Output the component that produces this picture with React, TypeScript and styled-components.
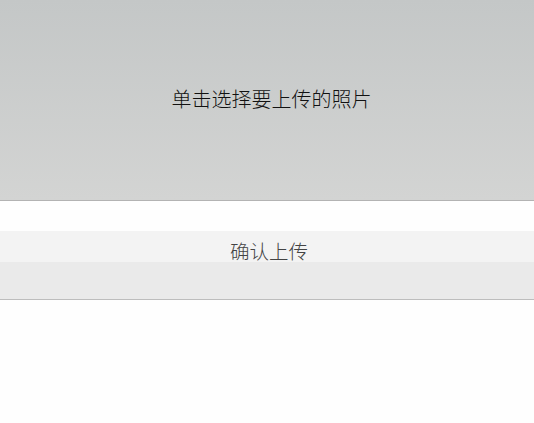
import styled, { createGlobalStyle } from "styled-components";

const GlobalStyle = createGlobalStyle`
  html, body {
    margin: 0;
    padding: 0;
    background: #fefefe;
    font-family: "Noto Sans CJK SC", "Noto Sans", sans-serif;
  }
`;

export default function App() {
  return (
    <>
      <GlobalStyle />
      <Page>
        <PickArea>
          <PickLabel>单击选择要上传的照片</PickLabel>
        </PickArea>
        <ConfirmButton type="button">确认上传</ConfirmButton>
      </Page>
    </>
  );
}

const Page = styled.div`
  display: flex;
  flex-direction: column;
  width: 100%;
`;

const PickArea = styled.div`
  display: flex;
  justify-content: center;
  align-items: center;
  height: 201px;
  padding: 0 0 3px 9px;
  box-sizing: border-box;
  background: linear-gradient(to bottom, #c4c7c7 0%, #d3d4d3 100%);
  border-bottom: 1px solid #b3b3b3;
  cursor: pointer;
`;

const PickLabel = styled.span`
  font-size: 20px;
  font-weight: 300;
  color: #111;
  line-height: 1;
`;

const ConfirmButton = styled.button`
  margin-top: 30px;
  height: 69px;
  padding: 9px 0 0 4px;
  display: flex;
  justify-content: center;
  align-items: flex-start;
  border: none;
  border-bottom: 1px solid #bdbdbd;
  background: linear-gradient(to bottom, #f3f3f3 0, #f3f3f3 31px, #eaeaea 31px, #eaeaea 100%);
  font-family: "Noto Sans CJK SC", "Noto Sans", sans-serif;
  font-size: 19.5px;
  font-weight: 300;
  line-height: 22px;
  color: #444;
  cursor: pointer;
`;
